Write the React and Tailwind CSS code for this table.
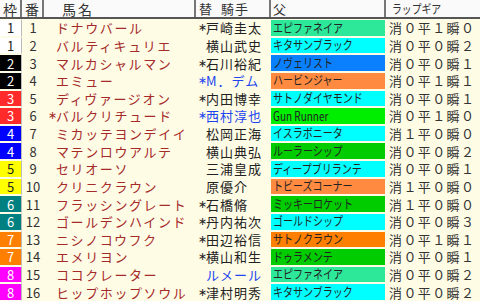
import React from 'react'

const wakuColors = {
    1: 'bg-white text-[#222]',
    2: 'bg-black text-white',
    3: 'bg-[#ff2a2a] text-white',
    4: 'bg-[#0000ff] text-white',
    5: 'bg-[#ffff00] text-[#222]',
    6: 'bg-[#008080] text-white',
    7: 'bg-[#ff8000] text-white',
    8: 'bg-[#ff00ff] text-white',
}

const sireColors = {
    mint: 'bg-[#2ee89a]',
    cyan: 'bg-[#00ffff]',
    blue: 'bg-[#0a80ff]',
    orange: 'bg-[#ff8a40]',
    orange2: 'bg-[#ff8000]',
    lime: 'bg-[#00ee00]',
    green: 'bg-[#00cc00]',
}

const horses = [
    { waku: 1, no: 1, name: 'ドナウバール', jm: true, jockey: '戸崎圭太', sire: 'エピファネイア', sc: 'mint', lap: '消０平１瞬０' },
    { waku: 1, no: 2, name: 'バルティキュリエ', jockey: '横山武史', sire: 'キタサンブラック', sc: 'cyan', lap: '消０平０瞬２' },
    { waku: 2, no: 3, name: 'マルカシャルマン', jm: true, jockey: '石川裕紀', sire: 'ノヴェリスト', sc: 'blue', lap: '消０平０瞬１' },
    { waku: 2, no: 4, name: 'エミュー', jm: true, jockey: 'M．デム', foreign: true, sire: 'ハービンジャー', sc: 'orange', lap: '消０平１瞬１' },
    { waku: 3, no: 5, name: 'ディヴァージオン', jm: true, jockey: '内田博幸', sire: 'サトノダイヤモンド', sc: 'cyan', lap: '消０平０瞬１' },
    { waku: 3, no: 6, name: 'バルクリチュード', hm: true, jm: true, jockey: '西村淳也', foreign: true, sire: 'Gun Runner', sc: 'lime', lap: '消０平１瞬０' },
    { waku: 4, no: 7, name: 'ミカッテヨンデイイ', jockey: '松岡正海', sire: 'イスラボニータ', sc: 'cyan', lap: '消１平０瞬０' },
    { waku: 4, no: 8, name: 'マテンロウアルテ', jockey: '横山典弘', sire: 'ルーラーシップ', sc: 'green', lap: '消０平０瞬２' },
    { waku: 5, no: 9, name: 'セリオーソ', jockey: '三浦皇成', sire: 'ディープブリランテ', sc: 'cyan', lap: '消０平０瞬１' },
    { waku: 5, no: 10, name: 'クリニクラウン', jockey: '原優介', sire: 'トビーズコーナー', sc: 'orange', lap: '消１平０瞬０' },
    { waku: 6, no: 11, name: 'フラッシングレート', jm: true, jockey: '石橋脩', sire: 'ミッキーロケット', sc: 'green', lap: '消１平０瞬０' },
    { waku: 6, no: 12, name: 'ゴールデンハインド', jm: true, jockey: '丹内祐次', sire: 'ゴールドシップ', sc: 'cyan', lap: '消０平０瞬３' },
    { waku: 7, no: 13, name: 'ニシノコウフク', jm: true, jockey: '田辺裕信', sire: 'サトノクラウン', sc: 'orange2', lap: '消０平１瞬１' },
    { waku: 7, no: 14, name: 'エメリヨン', jm: true, jockey: '横山和生', sire: 'ドゥラメンテ', sc: 'green', lap: '消０平０瞬１' },
    { waku: 8, no: 15, name: 'ココクレーター', jockey: 'ルメール', foreign: true, sire: 'エピファネイア', sc: 'mint', lap: '消０平０瞬２' },
    { waku: 8, no: 16, name: 'ヒップホップソウル', jm: true, jockey: '津村明秀', sire: 'キタサンブラック', sc: 'cyan', lap: '消０平０瞬２' },
]

const Mark = ({ on }) => (
    <span className="w-[8px] shrink-0 font-['DejaVu_Sans',sans-serif] text-[11px]">{on ? '∗' : ''}</span>
)

const App = () => {
    return (
        <div className="w-[480px] h-[301px] overflow-hidden bg-[#fffce6] font-['Noto_Sans_CJK_JP',sans-serif] leading-none">
            {/* header */}
            <div className="flex h-[19px] bg-[#fafafa] border-b-2 border-[#555] text-[#333]">
                <div className="w-[22px] flex items-center justify-center text-[14px] border-r-2 border-[#777]">枠</div>
                <div className="w-[22px] flex items-center justify-center text-[14px] border-r-2 border-[#777]">番</div>
                <div className="w-[152px] flex items-center pl-[18px] text-[14px] tracking-[2px] border-r-2 border-[#777]">馬名</div>
                <div className="w-[75px] flex items-center pl-[3px] text-[13px] border-r-2 border-[#777]">
                    <span>替</span>
                    <span className="ml-[9px] tracking-[1px]">騎手</span>
                </div>
                <div className="w-[115px] flex items-center pl-[2px] text-[13px] border-r-2 border-[#777]">父</div>
                <div className="flex-1 flex items-center pl-[6px] text-[12px]">
                    <span className="inline-block origin-left scale-x-[0.82] whitespace-nowrap">ラップギア</span>
                </div>
            </div>

            {/* rows */}
            <div className="flex flex-col h-[282px]">
                {horses.map((h) => (
                    <div key={h.no} className="flex-1 flex">
                        <div className={`w-[22px] flex items-center justify-center text-[13px] border-y border-[#fffce6] border-r border-r-[#bbb] ${wakuColors[h.waku]}`}>
                            {h.waku}
                        </div>
                        <div className="w-[22px] flex items-center justify-center text-[13px] text-[#333]">
                            {h.no}
                        </div>
                        <div className="w-[152px] flex items-center pl-[4px] text-[13px] text-[#a52a2a] whitespace-nowrap overflow-hidden">
                            <Mark on={h.hm} />
                            <span className="tracking-[1.6px]">{h.name}</span>
                        </div>
                        <div className={`w-[75px] flex items-center pl-[2px] text-[13px] whitespace-nowrap overflow-hidden ${h.foreign ? 'text-[#2244ee]' : 'text-[#222]'}`}>
                            <Mark on={h.jm} />
                            <span className="tracking-[1px]">{h.jockey}</span>
                        </div>
                        <div className={`w-[115px] flex items-center border-y border-r border-[#fffce6] pl-[2px] text-[#222] whitespace-nowrap overflow-hidden ${sireColors[h.sc]}`}>
                            <span className="inline-block origin-left scale-x-[0.8] text-[12.5px]">{h.sire}</span>
                        </div>
                        <div className="flex-1 flex items-center pl-[3px] text-[13px] tracking-[1.4px] text-[#333] whitespace-nowrap overflow-hidden">
                            {h.lap}
                        </div>
                    </div>
                ))}
            </div>
        </div>
    )
}

export default App
